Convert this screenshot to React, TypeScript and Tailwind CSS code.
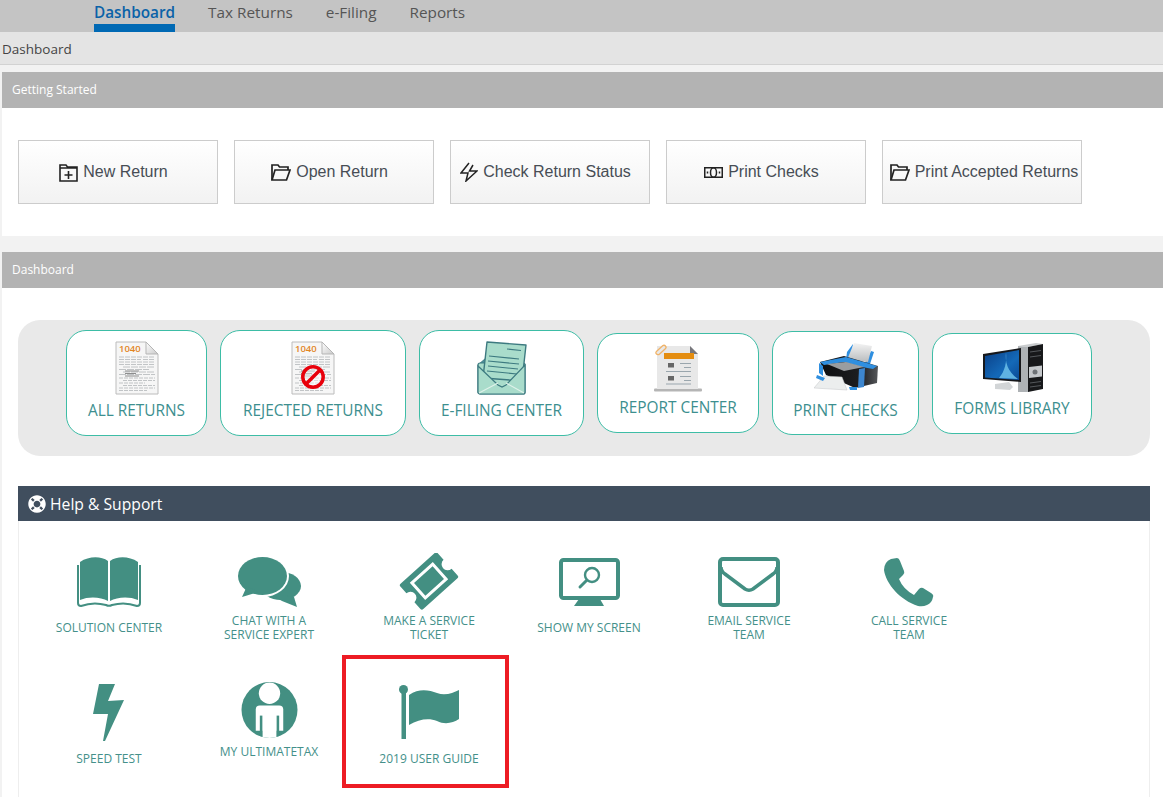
import type { ReactNode } from "react"
import { FaLifeRing } from "react-icons/fa"

function NewReturnIcon() {
  return (
    <svg width="19" height="19" viewBox="0 0 19 19" fill="none" stroke="#222" strokeWidth="1.6">
      <path d="M1 5V2h6l1.5 2H18v14H1V5h17" />
      <path d="M9.5 8v8M5.5 12h8" />
    </svg>
  )
}

function FolderIcon() {
  return (
    <svg width="20" height="18" viewBox="0 0 20 18" fill="none" stroke="#222" strokeWidth="1.7">
      <path d="M1 17V2h6l1.5 2H17v3" />
      <path d="M1 17h14.500L19 7H4L1 17z" />
    </svg>
  )
}

function BoltOutlineIcon() {
  return (
    <svg width="18" height="20" viewBox="0 0 18 20" fill="none" stroke="#222" strokeWidth="1.500">
      <path d="M9 1L1 11h7l-2 8 11-10H9.500L13 3" />
    </svg>
  )
}

function MoneyIcon() {
  return (
    <svg width="19" height="11" viewBox="0 0 19 11" fill="none" stroke="#222" strokeWidth="1.500">
      <rect x="0.75" y="0.75" width="17.5" height="9.5" />
      <ellipse cx="9.500" cy="5.500" rx="3" ry="4.800" />
      <path d="M3.500 4.500v2M15.500 4.500v2" />
    </svg>
  )
}

function TaxForm({ rejected = false }: { rejected?: boolean }) {
  return (
    <svg width="44" height="54" viewBox="0 0 44 54" className="block">
      <defs>
        <linearGradient id={rejected ? "fold-b" : "fold-a"} x1="0" y1="0" x2="1" y2="1">
          <stop offset="0" stopColor="#ffffff" />
          <stop offset="1" stopColor="#c9c9c9" />
        </linearGradient>
      </defs>
      <path d="M1 1h30l12 12v40H1z" fill="#f6f6f6" stroke="#bcbcbc" />
      <path d="M31 1v12h12z" fill={`url(#${rejected ? "fold-b" : "fold-a"})`} stroke="#b5b5b5" />
      <text x="4" y="11" fontSize="9.5" fontWeight="600" fill="#e2851f" fontFamily="'Open Sans', sans-serif">
        1040
      </text>
      <g stroke="#b4b7ba" strokeWidth="0.8" fill="none">
        <path d="M4 16h36M4 18.500h22M28 18.500h12M4 21h36M4 23.500h36" strokeDasharray="5 1" />
        <path d="M8 26h32M4 28.500h30M8 31h32M4 33.500h36" strokeDasharray="7 1" />
        <path d="M4 37h36M8 39.500h32M4 42h26M8 44.500h32M4 47h36M4 49.500h28" strokeDasharray="4 1" />
      </g>
      <path d="M10 30h14M10 32.500h11M10 35h14" stroke="#8d8d8d" strokeWidth="1" />
      {rejected && (
        <g fill="none" stroke="#e8000b" strokeWidth="3.500">
          <circle cx="22" cy="36" r="10.200" fill="#ffffff" fillOpacity="0.45" />
          <path d="M15 43L29 29" />
        </g>
      )}
    </svg>
  )
}

function MailIcon() {
  return (
    <svg width="50" height="54" viewBox="0 0 50 54" className="block">
      <path d="M1 24l8-7v18z" fill="#4c8f9c" stroke="#3d7a80" />
      <rect x="1" y="22" width="47" height="31" rx="2" fill="#a9dccb" stroke="#3d7a80" strokeWidth="1.200" />
      <path d="M10 1l39 3-4 36-39-3z" fill="#a9dccb" stroke="#3d7a80" strokeWidth="1.400" strokeLinejoin="round" />
      <path d="M30 8l14 1.500M12 15l30 3M11 20l31 3M11 25l30 3M10 30l30 3" stroke="#3d7a80" strokeWidth="1.100" />
      <path d="M1 25l20 19 4 2 4-2 19-20v27a2 2 0 0 1-2 2H3a2 2 0 0 1-2-2z" fill="#a9dccb" stroke="#3d7a80" strokeWidth="1.200" />
      <path d="M2 52l19-10M47 52L29 42" stroke="#dff2ea" strokeWidth="1.200" />
    </svg>
  )
}

function ReportIcon() {
  return (
    <svg width="48" height="48" viewBox="0 0 48 48" className="block">
      <rect x="0" y="44.500" width="48" height="3" rx="1" fill="#b5b5b5" />
      <path d="M3 2h33l8 8v35H3z" fill="#e8e8e8" />
      <path d="M36 2l8 8h-8z" fill="#77777c" />
      <rect x="10" y="9" width="30" height="6" fill="#e48d10" />
      <rect x="1" y="4" width="12" height="4" rx="2" transform="rotate(-42 7 6)" fill="none" stroke="#efb268" strokeWidth="1.300" />
      <rect x="14" y="19" width="6" height="4.500" fill="#666666" />
      <rect x="14" y="32" width="6" height="4.500" fill="#666666" />
      <path d="M26 19.500h11M30 23.500h7M12 27.500h25M26 32.500h11M30 36.500h7M12 40h25" stroke="#9aa6ad" strokeWidth="1.200" />
    </svg>
  )
}

function PrinterIcon() {
  return (
    <svg width="64" height="50" viewBox="0 0 64 50" className="block">
      <defs>
        <linearGradient id="sheet" x1="0" y1="0" x2="0" y2="1">
          <stop offset="0" stopColor="#f4f4f4" />
          <stop offset="1" stopColor="#b9bcbe" />
        </linearGradient>
        <linearGradient id="case" x1="0" y1="0" x2="1" y2="0">
          <stop offset="0" stopColor="#0d0e10" />
          <stop offset="0.7" stopColor="#1d1e21" />
          <stop offset="1" stopColor="#55575a" />
        </linearGradient>
      </defs>
      <path d="M33 10l6-8-2 17-5-1z" fill="#2f8fe0" />
      <path d="M57 9l3 1-5 15-5-2z" fill="#2f8fe0" />
      <path d="M40 1l18 3-4 16-21-2z" fill="url(#sheet)" />
      <path d="M6 20l24-6 34 10-1 17-22 5-29-13z" fill="url(#case)" />
      <path d="M6 20l26-5 31 9-4 3-11-2-18-5-20 3z" fill="#2f8fe0" />
      <path d="M13 22l19-2 18 5-20 4z" fill="#9a9da0" />
      <path d="M45 27l6-1-1 19-6 1z" fill="#3d86cf" />
      <path d="M5 21l4 3v10l-4-3z" fill="#2f8fe0" />
      <path d="M10 34l18 1 5 13-33-2z" fill="#eceeee" stroke="#c4c7c8" strokeWidth="0.500" />
      <path d="M3 33l8 3-2 3-7-3zM35 45l8 0 0 3-7 0z" fill="#2f8fe0" />
    </svg>
  )
}

function ComputerIcon() {
  return (
    <svg width="61" height="49" viewBox="0 0 61 49" className="block">
      <defs>
        <linearGradient id="screen" x1="0" y1="0" x2="1" y2="1">
          <stop offset="0" stopColor="#0a3f86" />
          <stop offset="0.6" stopColor="#1469b8" />
          <stop offset="1" stopColor="#0b4a96" />
        </linearGradient>
      </defs>
      <path d="M36 3l18-3 7 1-15 3z" fill="#c9ccce" />
      <path d="M36 3l10 1v45H36z" fill="#aeb2b5" />
      <path d="M46 4l15-3v45l-15 3z" fill="#17181a" />
      <path d="M47 24l13-1.500v11L47 35z" fill="#c4c7ca" />
      <circle cx="53" cy="29" r="2.500" fill="#6e7276" />
      <path d="M48 9l11-1.500M48 14l11-1.500M48 40l11-1.500M48 44l11-1.500" stroke="#55585c" />
      <path d="M1 11l38-6v34L1 36z" fill="#17181b" />
      <path d="M3 13l34-6v30L3 34.500z" fill="url(#screen)" />
      <path d="M24 9c-1 10 1 19 12 27L17 35c6-7 8-16 7-26z" fill="#5fb3e2" />
      <path d="M13 41l14-2 4 5-3 3-15-1z" fill="#d2d5d7" />
    </svg>
  )
}

const teal = "#438f82"

function BookIcon() {
  return (
    <svg width="64" height="50" viewBox="0 0 64 50" className="block" fill={teal}>
      <path d="M3 5C12-1 24-1 31 4v40c-7-4-19-5-28-1z" />
      <path d="M61 5C52-1 40-1 33 4v40c7-4 19-5 28-1z" />
      <path d="M1 8v38c0 2 1 3 3 3 8-3 18-3 25-1 2 1 4 1 6 0 7-2 17-2 25 1 2 0 3-1 3-3V8" fill="none" stroke={teal} strokeWidth="2" />
    </svg>
  )
}

function ChatIcon() {
  return (
    <svg width="63" height="50" viewBox="0 0 63 50" className="block" fill={teal}>
      <ellipse cx="43" cy="29" rx="20" ry="14" />
      <path d="M30 36l26 4 3 10-15-6z" />
      <ellipse cx="24.500" cy="19" rx="26.500" ry="21" fill="#fff" />
      <ellipse cx="24.500" cy="19" rx="24.500" ry="19" />
      <path d="M9 29L4 40l16-5z" />
    </svg>
  )
}

function TicketIcon() {
  return (
    <svg width="60" height="58" viewBox="0 0 60 58" className="block">
      <g transform="translate(30 28) rotate(-42)">
        <path
          d="M-23-17H23a2 2 0 0 1 2 2V-6a6 6 0 0 0 0 12v9a2 2 0 0 1-2 2H-23a2 2 0 0 1-2-2V6a6 6 0 0 0 0-12v-9a2 2 0 0 1 2-2z"
          fill={teal}
        />
        <rect x="-14" y="-10" width="28" height="20" fill="none" stroke="#fff" strokeWidth="3" />
      </g>
    </svg>
  )
}

function MonitorIcon() {
  return (
    <svg width="61" height="48" viewBox="0 0 61 48" className="block">
      <rect x="2" y="2" width="57" height="38" rx="2.500" fill="none" stroke={teal} strokeWidth="4" />
      <path d="M20 41h21l4 7H15z" fill={teal} />
      <circle cx="33" cy="17" r="7" fill="none" stroke={teal} strokeWidth="2.400" />
      <path d="M27.500 22.500L21 29" stroke={teal} strokeWidth="3" strokeLinecap="round" />
    </svg>
  )
}

function EnvelopeIcon() {
  return (
    <svg width="62" height="50" viewBox="0 0 62 50" className="block" fill="none" stroke={teal} strokeWidth="4">
      <rect x="2" y="2" width="58" height="46" rx="3" />
      <path d="M3 10c0 3 1 5 4 7l20 15c2.500 1.500 5.500 1.500 8 0l20-15c3-2 4-4 4-7" strokeWidth="3.500" />
    </svg>
  )
}

function PhoneIcon() {
  return (
    <svg width="50" height="49" viewBox="0 0 50 49" className="block" fill={teal}>
      <path d="M7 1l6-1q2 0 3 3l4 10q1 2-1 4l-4 4q4 10 15 16l5-6q2-2 4-1l8 5q3 2 2 4-1 6-6 8-4 2-9 1C16 42 2 26 0 12q0-8 7-11z" />
    </svg>
  )
}

function BoltIcon() {
  return (
    <svg width="32" height="58" viewBox="0 0 32 58" className="block" fill={teal}>
      <path d="M6 0h16l-7 17 16-1-19 41h-2l5-27H0z" />
    </svg>
  )
}

function UserIcon() {
  return (
    <svg width="57" height="56" viewBox="0 0 55 55" className="block -translate-y-[3px]">
      <defs>
        <clipPath id="user-clip">
          <circle cx="27.500" cy="27.500" r="27.500" />
        </clipPath>
      </defs>
      <circle cx="27.500" cy="27.500" r="27.500" fill={teal} />
      <g clipPath="url(#user-clip)">
        <circle cx="27.500" cy="11" r="10.500" fill="#fff" />
        <path d="M14 27a4 4 0 0 1 4-4h19a4 4 0 0 1 4 4v21H14z" fill="#fff" />
        <rect x="20.500" y="33" width="14" height="24" fill="#fff" />
        <rect x="18" y="33" width="2.500" height="24" fill={teal} />
        <rect x="34.500" y="33" width="2.500" height="24" fill={teal} />
      </g>
    </svg>
  )
}

function FlagIcon() {
  return (
    <svg width="60" height="54" viewBox="0 0 60 54" className="block -translate-y-px" fill={teal}>
      <circle cx="4.500" cy="4.500" r="4.500" />
      <rect x="2.500" y="6" width="4.500" height="48" />
      <path d="M10 10C20 3 30 5 38 8c8 3 16 0 22-3v29c-6 4-14 6-22 2-8-3-18-2-28 4z" />
    </svg>
  )
}

function ActionButton({ icon, label, className = "pr-[9px]" }: { icon: ReactNode; label: string; className?: string }) {
  return (
    <button className={`flex h-[64px] w-[200px] items-center justify-center gap-[5px] border border-[#cccccc] bg-gradient-to-b from-white to-[#f2f2f2] font-['Liberation_Sans',sans-serif] text-[16px] text-[#474d55] ${className}`}>
      {icon}
      <span>{label}</span>
    </button>
  )
}

function DashCard({ icon, label, className }: { icon: ReactNode; label: string; className: string }) {
  return (
    <div className={`flex flex-col items-center rounded-[20px] border border-[#3dbda6] bg-white ${className}`}>
      {icon}
      <span className="text-[15.4px] leading-[20px] text-[#3d8f8f]">{label}</span>
    </div>
  )
}

function HelpItem({ icon, label, labelClass = "" }: { icon: ReactNode; label: ReactNode; labelClass?: string }) {
  return (
    <div className="flex h-[131px] flex-col items-center">
      <div className="flex h-[64px] items-center justify-center">{icon}</div>
      <div className={`flex h-[28px] items-center text-center text-[12px] leading-[14px] text-[#44908a] ${labelClass}`}>
        <span>{label}</span>
      </div>
    </div>
  )
}

export default function App() {
  return (
    <div className="h-[797px] w-[1163px] overflow-hidden bg-[#f2f2f2] font-['Open_Sans',sans-serif]">
      <nav className="flex h-[32px] gap-[33px] bg-[#c4c4c4] pl-[94px] text-[15.3px] text-[#555555]">
        <a className="h-[32px] border-b-[8px] border-[#0069b4] leading-[25px] font-semibold text-[#0a62a8]">Dashboard</a>
        <a className="leading-[25px]">Tax Returns</a>
        <a className="leading-[25px]">e-Filing</a>
        <a className="leading-[25px]">Reports</a>
      </nav>
      <div className="h-[33px] border-b border-[#d2d2d2] bg-[#e4e4e4] pl-[2px] text-[13.5px] leading-[34px] text-[#444444]">
        Dashboard
      </div>

      <div className="pt-[7px] pl-[2px]">
        <div className="h-[36px] bg-[#b3b3b3] pl-[10px] text-[12px] leading-[36px] font-medium text-white">Getting Started</div>
        <div className="flex h-[128px] gap-[16px] bg-white pt-[32px] pl-[16px]">
          <ActionButton icon={<NewReturnIcon />} label="New Return" />
          <ActionButton icon={<FolderIcon />} label="Open Return" />
          <ActionButton icon={<BoltOutlineIcon />} label="Check Return Status" />
          <ActionButton icon={<MoneyIcon />} label="Print Checks" />
          <ActionButton icon={<FolderIcon />} label="Print Accepted Returns" className="pl-[4px]" />
        </div>

        <div className="mt-[16px] h-[36px] bg-[#b3b3b3] pl-[10px] text-[12px] leading-[36px] font-medium text-white">Dashboard</div>
        <div className="h-[509px] bg-white pt-[32px] pl-[16px]">
          <div className="flex h-[136px] w-[1132px] items-center gap-[13px] rounded-[22px] bg-[#e9e9e9] pb-[10px] pl-[48px]">
            <DashCard icon={<TaxForm />} label="ALL RETURNS" className="h-[106px] w-[141px] gap-[6px] pt-[10px]" />
            <DashCard icon={<TaxForm rejected />} label="REJECTED RETURNS" className="h-[106px] w-[186px] gap-[6px] pt-[10px]" />
            <DashCard icon={<MailIcon />} label="E-FILING CENTER" className="h-[106px] w-[165px] gap-[6px] pt-[10px]" />
            <DashCard icon={<ReportIcon />} label="REPORT CENTER" className="h-[100px] w-[162px] gap-[6px] pt-[10px]" />
            <DashCard icon={<PrinterIcon />} label="PRINT CHECKS" className="h-[104px] w-[147px] gap-[9px] pt-[10px]" />
            <DashCard icon={<ComputerIcon />} label="FORMS LIBRARY" className="h-[101px] w-[160px] gap-[7px] pt-[9px]" />
          </div>

          <div className="mt-[30px] w-[1132px]">
            <div className="flex h-[35px] items-center gap-[4px] bg-[#404e5e] pl-[10px] text-[15.7px] leading-[24px] text-white">
              <FaLifeRing size={18} />
              <span>Help &amp; Support</span>
            </div>
            <div className="grid h-[276px] grid-cols-[repeat(6,160px)] border-x border-[#eeeeee] pt-[29px] pl-[10px]">
              <HelpItem icon={<BookIcon />} label="SOLUTION CENTER" />
              <HelpItem icon={<ChatIcon />} label={<>CHAT WITH A<br />SERVICE EXPERT</>} />
              <HelpItem icon={<TicketIcon />} label={<>MAKE A SERVICE<br />TICKET</>} />
              <HelpItem icon={<MonitorIcon />} label="SHOW MY SCREEN" />
              <HelpItem icon={<EnvelopeIcon />} label={<>EMAIL SERVICE<br />TEAM</>} />
              <HelpItem icon={<PhoneIcon />} label={<>CALL SERVICE<br />TEAM</>} />
              <HelpItem icon={<BoltIcon />} label="SPEED TEST" />
              <HelpItem icon={<UserIcon />} label="MY ULTIMATETAX" labelClass="-mt-[7px]" />
              <div className="relative">
                <HelpItem icon={<FlagIcon />} label="2019 USER GUIDE" />
                <div className="absolute top-[-26px] left-[-7px] h-[133px] w-[167px] border-[4px] border-[#ed1c24]" />
              </div>
            </div>
          </div>
        </div>
      </div>
    </div>
  )
}
